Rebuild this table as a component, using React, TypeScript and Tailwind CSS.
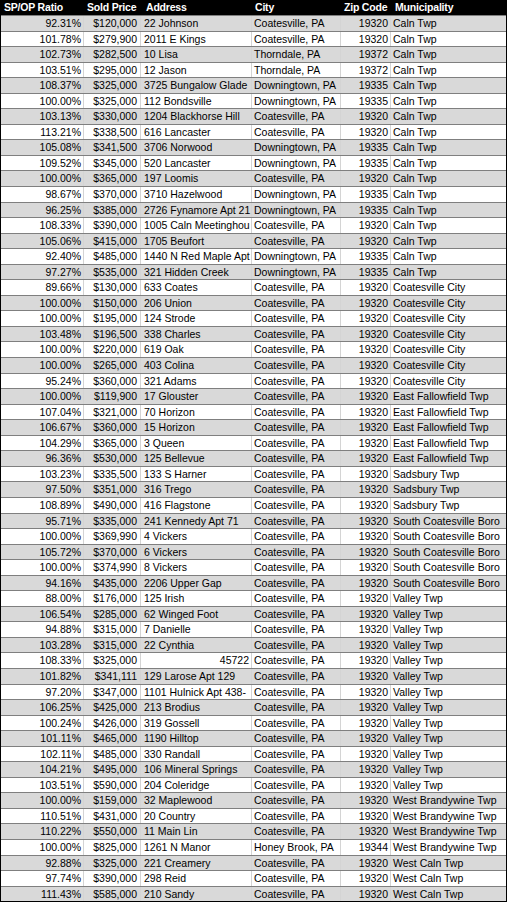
import React from "react";

type Row = [string, string, string, string, string, string];

const C = "Coatesville, PA";
const D = "Downingtown, PA";
const T = "Thorndale, PA";

const rows: Row[] = [
  ["92.31%", "$120,000", "22 Johnson", C, "19320", "Caln Twp"],
  ["101.78%", "$279,900", "2011 E Kings", C, "19320", "Caln Twp"],
  ["102.73%", "$282,500", "10 Lisa", T, "19372", "Caln Twp"],
  ["103.51%", "$295,000", "12 Jason", T, "19372", "Caln Twp"],
  ["108.37%", "$325,000", "3725 Bungalow Glade", D, "19335", "Caln Twp"],
  ["100.00%", "$325,000", "112 Bondsville", D, "19335", "Caln Twp"],
  ["103.13%", "$330,000", "1204 Blackhorse Hill", C, "19320", "Caln Twp"],
  ["113.21%", "$338,500", "616 Lancaster", C, "19320", "Caln Twp"],
  ["105.08%", "$341,500", "3706 Norwood", D, "19335", "Caln Twp"],
  ["109.52%", "$345,000", "520 Lancaster", D, "19335", "Caln Twp"],
  ["100.00%", "$365,000", "197 Loomis", C, "19320", "Caln Twp"],
  ["98.67%", "$370,000", "3710 Hazelwood", D, "19335", "Caln Twp"],
  ["96.25%", "$385,000", "2726 Fynamore Apt 21", D, "19335", "Caln Twp"],
  ["108.33%", "$390,000", "1005 Caln Meetinghou", C, "19320", "Caln Twp"],
  ["105.06%", "$415,000", "1705 Beufort", C, "19320", "Caln Twp"],
  ["92.40%", "$485,000", "1440 N Red Maple Apt", D, "19335", "Caln Twp"],
  ["97.27%", "$535,000", "321 Hidden Creek", D, "19335", "Caln Twp"],
  ["89.66%", "$130,000", "633 Coates", C, "19320", "Coatesville City"],
  ["100.00%", "$150,000", "206 Union", C, "19320", "Coatesville City"],
  ["100.00%", "$195,000", "124 Strode", C, "19320", "Coatesville City"],
  ["103.48%", "$196,500", "338 Charles", C, "19320", "Coatesville City"],
  ["100.00%", "$220,000", "619 Oak", C, "19320", "Coatesville City"],
  ["100.00%", "$265,000", "403 Colina", C, "19320", "Coatesville City"],
  ["95.24%", "$360,000", "321 Adams", C, "19320", "Coatesville City"],
  ["100.00%", "$119,900", "17 Glouster", C, "19320", "East Fallowfield Twp"],
  ["107.04%", "$321,000", "70 Horizon", C, "19320", "East Fallowfield Twp"],
  ["106.67%", "$360,000", "15 Horizon", C, "19320", "East Fallowfield Twp"],
  ["104.29%", "$365,000", "3 Queen", C, "19320", "East Fallowfield Twp"],
  ["96.36%", "$530,000", "125 Bellevue", C, "19320", "East Fallowfield Twp"],
  ["103.23%", "$335,500", "133 S Harner", C, "19320", "Sadsbury Twp"],
  ["97.50%", "$351,000", "316 Trego", C, "19320", "Sadsbury Twp"],
  ["108.89%", "$490,000", "416 Flagstone", C, "19320", "Sadsbury Twp"],
  ["95.71%", "$335,000", "241 Kennedy Apt 71", C, "19320", "South Coatesville Boro"],
  ["100.00%", "$369,990", "4 Vickers", C, "19320", "South Coatesville Boro"],
  ["105.72%", "$370,000", "6 Vickers", C, "19320", "South Coatesville Boro"],
  ["100.00%", "$374,990", "8 Vickers", C, "19320", "South Coatesville Boro"],
  ["94.16%", "$435,000", "2206 Upper Gap", C, "19320", "South Coatesville Boro"],
  ["88.00%", "$176,000", "125 Irish", C, "19320", "Valley Twp"],
  ["106.54%", "$285,000", "62 Winged Foot", C, "19320", "Valley Twp"],
  ["94.88%", "$315,000", "7 Danielle", C, "19320", "Valley Twp"],
  ["103.28%", "$315,000", "22 Cynthia", C, "19320", "Valley Twp"],
  ["108.33%", "$325,000", "45722", C, "19320", "Valley Twp"],
  ["101.82%", "$341,111", "129 Larose Apt 129", C, "19320", "Valley Twp"],
  ["97.20%", "$347,000", "1101 Hulnick Apt 438-", C, "19320", "Valley Twp"],
  ["106.25%", "$425,000", "213 Brodius", C, "19320", "Valley Twp"],
  ["100.24%", "$426,000", "319 Gossell", C, "19320", "Valley Twp"],
  ["101.11%", "$465,000", "1190 Hilltop", C, "19320", "Valley Twp"],
  ["102.11%", "$485,000", "330 Randall", C, "19320", "Valley Twp"],
  ["104.21%", "$495,000", "106 Mineral Springs", C, "19320", "Valley Twp"],
  ["103.51%", "$590,000", "204 Coleridge", C, "19320", "Valley Twp"],
  ["100.00%", "$159,000", "32 Maplewood", C, "19320", "West Brandywine Twp"],
  ["110.51%", "$431,000", "20 Country", C, "19320", "West Brandywine Twp"],
  ["110.22%", "$550,000", "11 Main Lin", C, "19320", "West Brandywine Twp"],
  ["100.00%", "$825,000", "1261 N Manor", "Honey Brook, PA", "19344", "West Brandywine Twp"],
  ["92.88%", "$325,000", "221 Creamery", C, "19320", "West Caln Twp"],
  ["97.74%", "$390,000", "298 Reid", C, "19320", "West Caln Twp"],
  ["111.43%", "$585,000", "210 Sandy", C, "19320", "West Caln Twp"],
];

const grid = "grid grid-cols-[83px_57px_111px_89px_50px_115px]";
const cell = "overflow-hidden whitespace-nowrap border-r border-[#d4d4d4] leading-[15px]";

export default function App() {
  return (
    <div
      className="w-[507px] bg-white text-black"
      style={{ fontFamily: '"Liberation Sans", Arial, sans-serif' }}
    >
      <div className="border-x border-b border-black">
        <div className={`${grid} h-[15px] bg-black text-white font-bold text-[10.5px] leading-[15px] tracking-[-0.2px]`}>
          <div className="pl-[3px] whitespace-nowrap">SP/OP Ratio</div>
          <div className="pl-[3px] whitespace-nowrap">Sold Price</div>
          <div className="pl-[5px] whitespace-nowrap">Address</div>
          <div className="pl-[3px] whitespace-nowrap">City</div>
          <div className="pl-[3px] whitespace-nowrap">Zip Code</div>
          <div className="pl-[4px] whitespace-nowrap">Municipality</div>
        </div>
        {rows.map((r, i) => (
          <div
            key={i}
            className={`${grid} h-[15.56px] text-[10.5px] border-t border-[#7f7f7f] ${
              i % 2 === 0 ? "bg-[#d9d9d9]" : "bg-white"
            }`}
          >
            <div className={`${cell} text-right pr-[2px]`}>{r[0]}</div>
            <div className={`${cell} text-right pr-[3px]`}>{r[1]}</div>
            <div className={`${cell} pl-[3px] ${/^\d+$/.test(r[2]) ? "text-right pr-[2px]" : ""}`}>{r[2]}</div>
            <div className={`${cell} pl-[2px]`}>{r[3]}</div>
            <div className={`${cell} text-right pr-[2px]`}>{r[4]}</div>
            <div className="overflow-hidden whitespace-nowrap leading-[15px] pl-[2px]">{r[5]}</div>
          </div>
        ))}
      </div>
    </div>
  );
}
